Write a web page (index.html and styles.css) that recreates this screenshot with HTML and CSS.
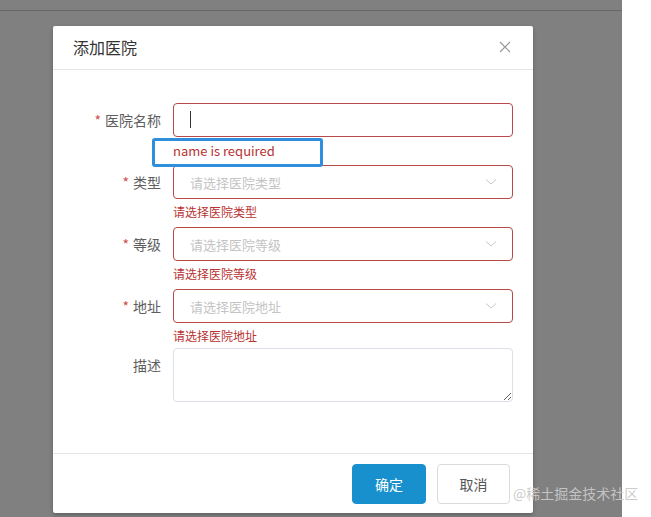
FILE: index.html
```html
<!DOCTYPE html>
<html lang="zh">
<head>
<meta charset="utf-8">
<title>添加医院</title>
<link rel="stylesheet" href="styles.css">
</head>
<body>
<div class="page">
  <div class="overlay">
    <div class="topbar"></div>
    <div class="modal">
      <div class="modal-header">
        <span class="modal-title">添加医院</span>
        <svg class="close" width="12" height="12" viewBox="0 0 12 12"><path d="M1 1L11 11M11 1L1 11" stroke="#9a9a9a" stroke-width="1.2" fill="none"/></svg>
      </div>
      <div class="modal-body">
        <div class="form">
          <div class="item">
            <label class="label"><span class="req">*</span>医院名称</label>
            <div class="control">
              <div class="input error"><span class="caret"></span></div>
              <div class="msg msg-en">name is required<span class="highlight"></span></div>
            </div>
          </div>
          <div class="item">
            <label class="label"><span class="req">*</span>类型</label>
            <div class="control">
              <div class="input select error"><span class="ph">请选择医院类型</span><svg class="arrow" width="12" height="8" viewBox="0 0 12 8"><path d="M1 1.5L6 6L11 1.5" stroke="#c8c8c8" stroke-width="1" fill="none"/></svg></div>
              <div class="msg">请选择医院类型</div>
            </div>
          </div>
          <div class="item">
            <label class="label"><span class="req">*</span>等级</label>
            <div class="control">
              <div class="input select error"><span class="ph">请选择医院等级</span><svg class="arrow" width="12" height="8" viewBox="0 0 12 8"><path d="M1 1.5L6 6L11 1.5" stroke="#c8c8c8" stroke-width="1" fill="none"/></svg></div>
              <div class="msg">请选择医院等级</div>
            </div>
          </div>
          <div class="item item-last-error">
            <label class="label"><span class="req">*</span>地址</label>
            <div class="control">
              <div class="input select error"><span class="ph">请选择医院地址</span><svg class="arrow" width="12" height="8" viewBox="0 0 12 8"><path d="M1 1.5L6 6L11 1.5" stroke="#c8c8c8" stroke-width="1" fill="none"/></svg></div>
              <div class="msg">请选择医院地址</div>
            </div>
          </div>
          <div class="item">
            <label class="label">描述</label>
            <div class="control">
              <textarea class="textarea"></textarea>
            </div>
          </div>
        </div>
      </div>
      <div class="modal-footer">
        <button class="btn btn-primary">确定</button>
        <button class="btn btn-default">取消</button>
      </div>
    </div>
  </div>
  <div class="watermark">@稀土掘金技术社区</div>
</div>
</body>
</html>
```
FILE: styles.css
```css
* { box-sizing: border-box; }
html, body { margin: 0; padding: 0; }
body {
  width: 651px;
  height: 517px;
  overflow: hidden;
  background: #ffffff;
  font-family: "Noto Sans CJK SC", "Noto Sans", sans-serif;
}
.page {
  position: relative;
  width: 651px;
  height: 517px;
}
.overlay {
  width: 622px;
  height: 517px;
  background: #808080;
  display: flex;
  flex-direction: column;
}
.topbar {
  height: 11px;
  border-bottom: 1px solid #676767;
  flex: none;
}
.modal {
  flex: none;
  margin: 15px 0 0 53px;
  width: 480px;
  height: 487px;
  background: #ffffff;
  border-radius: 2px;
  box-shadow: 0 2px 4px rgba(0,0,0,0.25);
  display: flex;
  flex-direction: column;
}
.modal-header {
  height: 44px;
  border-bottom: 1px solid #e4e4e4;
  display: flex;
  align-items: center;
  justify-content: space-between;
  padding: 0 22px 0 20px;
  flex: none;
}
.modal-title {
  font-size: 16px;
  color: #333333;
  line-height: 20px;
  margin-top: -1px;
}
.close { display: block; margin-top: -1px; }
.modal-body {
  height: 383px;
  padding-top: 33px;
  flex: none;
}
.form {
  display: flex;
  flex-direction: column;
}
.item {
  display: grid;
  grid-template-columns: 108px 340px;
  column-gap: 12px;
  margin-bottom: 2px;
}
.item-last-error { margin-bottom: -1px; }
.label {
  text-align: right;
  font-size: 14px;
  line-height: 34px;
  height: 34px;
  color: #5e5e5e;
}
.req {
  color: #d0504a;
  margin-right: 4px;
}
.control { display: flex; flex-direction: column; }
.input {
  height: 34px;
  border: 1px solid #dcdfe6;
  border-radius: 4px;
  background: #fff;
  display: flex;
  align-items: center;
  padding: 0 15px 0 16px;
}
.input.error { border-color: #b94848; }
.caret {
  width: 1px;
  height: 17px;
  background: #333;
  margin-top: -1px;
}
.select { justify-content: space-between; }
.ph {
  font-size: 13px;
  color: #c4c4c4;
}
.arrow { display: block; }
.msg {
  position: relative;
  height: 26px;
  line-height: 26px;
  font-size: 12px;
  color: #b83232;
}
.msg-en {
  font-size: 13px;
  line-height: 28px;
}
.highlight {
  position: absolute;
  left: -21px;
  top: 1px;
  width: 171px;
  height: 29px;
  border: 3px solid #2f8fdc;
  border-radius: 3px;
}
.textarea {
  display: block;
  width: 340px;
  height: 54px;
  border: 1px solid #dcdfe6;
  border-radius: 4px;
  resize: vertical;
  font-family: inherit;
  margin: 0;
}
.modal-footer {
  flex: 1;
  border-top: 1px solid #e4e4e4;
  display: flex;
  justify-content: flex-end;
  align-items: flex-start;
  gap: 11px;
  padding: 10px 23px 0 0;
}
.btn {
  height: 40px;
  border-radius: 4px;
  font-family: inherit;
  font-size: 14px;
  padding: 0;
  cursor: pointer;
}
.btn-primary {
  width: 74px;
  background: #1890cd;
  border: 1px solid #1890cd;
  color: #ffffff;
}
.btn-default {
  width: 73px;
  background: #ffffff;
  border: 1px solid #dcdcdc;
  color: #555555;
}
.watermark {
  position: absolute;
  left: 513px;
  top: 483px;
  font-size: 14px;
  line-height: 20px;
  color: rgba(200,200,200,0.95);
  white-space: nowrap;
}
```
